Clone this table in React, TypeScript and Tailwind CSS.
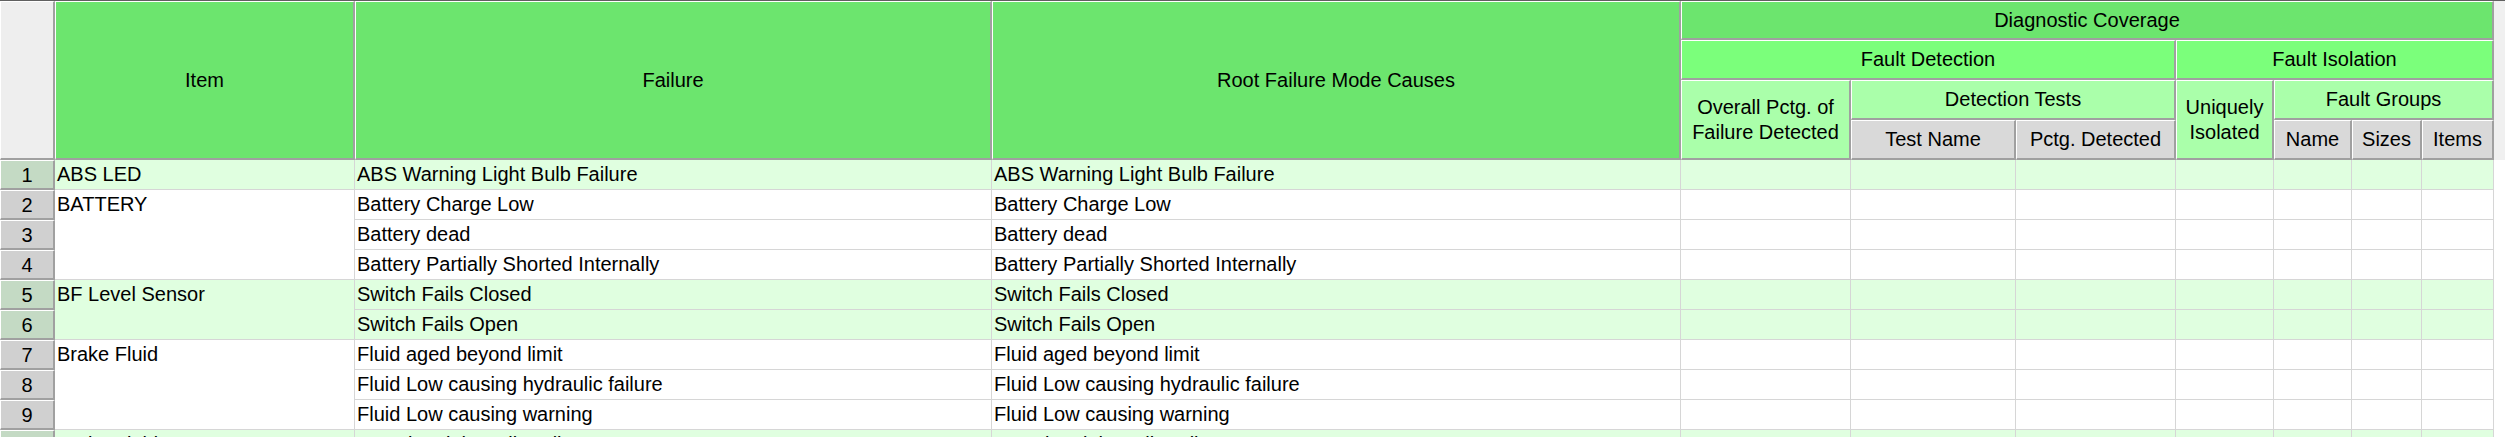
import type { ReactNode } from 'react';

type Group = { item: string; green: boolean; failures: string[] };

const groups: Group[] = [
  { item: 'ABS LED', green: true, failures: ['ABS Warning Light Bulb Failure'] },
  {
    item: 'BATTERY',
    green: false,
    failures: ['Battery Charge Low', 'Battery dead', 'Battery Partially Shorted Internally'],
  },
  { item: 'BF Level Sensor', green: true, failures: ['Switch Fails Closed', 'Switch Fails Open'] },
  {
    item: 'Brake Fluid',
    green: false,
    failures: ['Fluid aged beyond limit', 'Fluid Low causing hydraulic failure', 'Fluid Low causing warning'],
  },
  { item: 'Brake Fluid LED', green: true, failures: ['R Brake Light Bulb Failure'] },
];

const spanClass: Record<number, string> = {
  1: 'row-span-1',
  2: 'row-span-2',
  3: 'row-span-3',
};

function Hd({ className, children }: { className: string; children?: ReactNode }) {
  return (
    <div
      className={`flex items-center justify-center text-center leading-[25px] border-t border-l border-t-white border-l-white border-r-2 border-b-2 border-r-[#a0a0a0] border-b-[#a0a0a0] ${className}`}
    >
      {children}
    </div>
  );
}

function Cell({ green, children }: { green: boolean; children?: ReactNode }) {
  return (
    <div
      className={`border-r border-b border-[#d6d6d6] px-[2px] leading-[29px] whitespace-nowrap overflow-hidden ${
        green ? 'bg-[#e0ffe0]' : 'bg-white'
      }`}
    >
      {children}
    </div>
  );
}

export default function App() {
  let rowNo = 0;
  return (
    <div className="w-full bg-white text-black text-[20px] font-['Liberation_Sans',Arial,sans-serif]">
      <div className="grid grid-cols-[55px_300px_637px_689px_170px_165px_160px_98px_78px_70px_72px_1fr] grid-rows-[39px_40px_40px_40px] auto-rows-[30px] border-t border-t-[#606060]">
        {/* header */}
        <Hd className="col-start-1 row-start-1 row-span-4 bg-[#eeeeee]" />
        <Hd className="col-start-2 row-start-1 row-span-4 bg-[#6ce56e]">Item</Hd>
        <Hd className="col-start-3 row-start-1 row-span-4 bg-[#6ce56e]">Failure</Hd>
        <Hd className="col-start-4 row-start-1 row-span-4 bg-[#6ce56e]">Root Failure Mode Causes</Hd>
        <Hd className="col-start-5 col-span-7 row-start-1 bg-[#6ce56e]">Diagnostic Coverage</Hd>
        <Hd className="col-start-5 col-span-3 row-start-2 bg-[#7bff7b]">Fault Detection</Hd>
        <Hd className="col-start-8 col-span-4 row-start-2 bg-[#7bff7b]">Fault Isolation</Hd>
        <Hd className="col-start-5 row-start-3 row-span-2 bg-[#aaffaa]">
          Overall Pctg. of
          <br />
          Failure Detected
        </Hd>
        <Hd className="col-start-6 col-span-2 row-start-3 bg-[#aaffaa]">Detection Tests</Hd>
        <Hd className="col-start-6 row-start-4 bg-[#d9d9d9]">Test Name</Hd>
        <Hd className="col-start-7 row-start-4 bg-[#d9d9d9]">Pctg. Detected</Hd>
        <Hd className="col-start-8 row-start-3 row-span-2 bg-[#aaffaa]">
          Uniquely
          <br />
          Isolated
        </Hd>
        <Hd className="col-start-9 col-span-3 row-start-3 bg-[#aaffaa]">Fault Groups</Hd>
        <Hd className="col-start-9 row-start-4 bg-[#d9d9d9]">Name</Hd>
        <Hd className="col-start-10 row-start-4 bg-[#d9d9d9]">Sizes</Hd>
        <Hd className="col-start-11 row-start-4 bg-[#d9d9d9]">Items</Hd>
        <div className="col-start-12 row-start-1 row-span-4 bg-[#f0f0f0]" />

        {/* body */}
        {groups.map((g) =>
          g.failures.map((f, i) => {
            rowNo += 1;
            return [
              <div
                key={`h${rowNo}`}
                className={`col-start-1 flex items-center justify-center leading-none border-t border-l border-t-white border-l-white border-r-2 border-b-2 border-r-[#a0a0a0] border-b-[#a0a0a0] ${
                  g.green ? 'bg-[#c4dac4]' : 'bg-[#d0d0d0]'
                }`}
              >
                {rowNo}
              </div>,
              i === 0 ? (
                <div
                  key={`i${rowNo}`}
                  className={`${spanClass[g.failures.length]} border-r border-b border-[#d6d6d6] px-[2px] leading-[29px] whitespace-nowrap overflow-hidden ${
                    g.green ? 'bg-[#e0ffe0]' : 'bg-white'
                  }`}
                >
                  {g.item}
                </div>
              ) : null,
              <Cell key={`f${rowNo}`} green={g.green}>{f}</Cell>,
              <Cell key={`r${rowNo}`} green={g.green}>{f}</Cell>,
              ...[0, 1, 2, 3, 4, 5, 6].map((c) => <Cell key={`e${rowNo}-${c}`} green={g.green} />),
              <div key={`x${rowNo}`} className="bg-white" />,
            ];
          }),
        )}
      </div>
    </div>
  );
}
